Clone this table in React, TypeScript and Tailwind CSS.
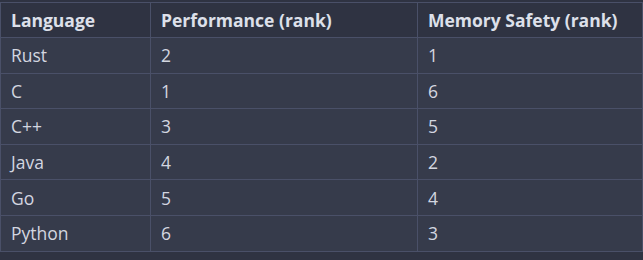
const rows = [
  ["Rust", "2", "1"],
  ["C", "1", "6"],
  ["C++", "3", "5"],
  ["Java", "4", "2"],
  ["Go", "5", "4"],
  ["Python", "6", "3"],
];

export default function App() {
  return (
    <div className="h-[260px] w-[643px] bg-[#2f3342] pt-[2px] font-['Open_Sans',sans-serif] text-[17.5px]">
      <table className="w-full table-fixed border-collapse">
        <colgroup>
          <col className="w-[150px]" />
          <col className="w-[267px]" />
          <col />
        </colgroup>
        <thead>
          <tr className="h-[35px] text-left">
            {["Language", "Performance (rank)", "Memory Safety (rank)"].map((h) => (
              <th
                key={h}
                className="border border-[#4a5068] px-[10px] font-bold text-[#dde0ea]"
              >
                {h}
              </th>
            ))}
          </tr>
        </thead>
        <tbody>
          {rows.map((r) => (
            <tr key={r[0]} className="h-[35.6px] bg-[#363b4b]">
              {r.map((c, i) => (
                <td key={i} className="border border-[#4a5068] px-[10px] leading-[20px] text-[#d3d6e0]">
                  {c}
                </td>
              ))}
            </tr>
          ))}
        </tbody>
      </table>
    </div>
  );
}
